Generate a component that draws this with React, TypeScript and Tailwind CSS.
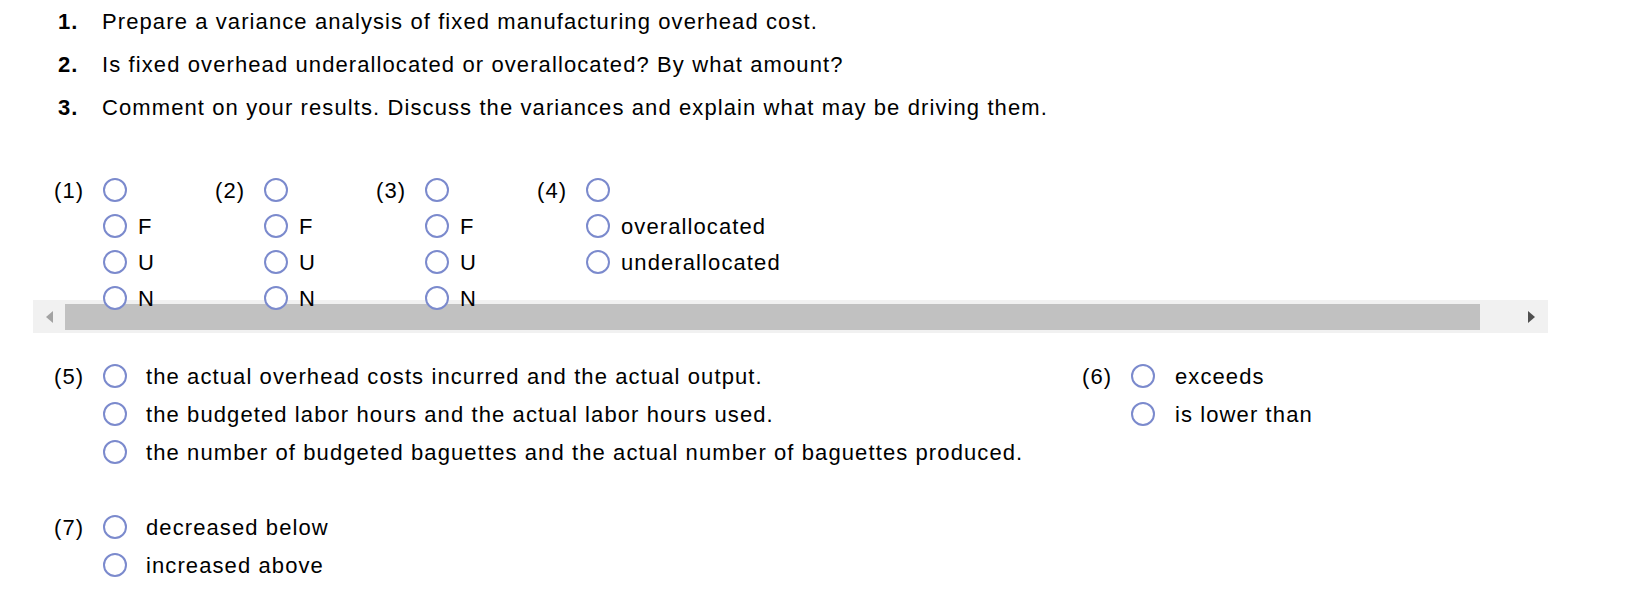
import React from "react";

const questions = [
  "Prepare a variance analysis of fixed manufacturing overhead cost.",
  "Is fixed overhead underallocated or overallocated? By what amount?",
  "Comment on your results. Discuss the variances and explain what may be driving them.",
];

const topGroups = [
  { label: "(1)", options: ["", "F", "U", "N"] },
  { label: "(2)", options: ["", "F", "U", "N"] },
  { label: "(3)", options: ["", "F", "U", "N"] },
  { label: "(4)", options: ["", "overallocated", "underallocated"] },
];

function Radio() {
  return <span className="inline-block w-[24px] h-[24px] shrink-0 rounded-full border-[2px] border-[#7b8acd] bg-white" />;
}

function Group({ label, options, rowH, gap, width }: { label: string; options: string[]; rowH: string; gap: string; width?: string }) {
  return (
    <div className={`flex items-start shrink-0 ${width ?? ""}`}>
      <div className="w-[49px] shrink-0">
        <div className={`${rowH} flex items-center`}>{label}</div>
      </div>
      <div className="flex flex-col">
        {options.map((opt, i) => (
          <label key={i} className={`${rowH} shrink-0 flex items-center ${gap} whitespace-nowrap`}>
            <Radio />
            <span>{opt}</span>
          </label>
        ))}
      </div>
    </div>
  );
}

export default function App() {
  return (
    <div className="w-[1628px] h-[595px] bg-white text-black overflow-hidden text-[22px] tracking-[1.1px]" style={{ fontFamily: '"Liberation Sans", Arial, sans-serif' }}>
      {/* Questions */}
      <ol className="pl-[58px]">
        {questions.map((q, i) => (
          <li key={i} className="flex h-[43px] items-center">
            <span className="w-[44px] font-bold">{i + 1}.</span>
            <span>{q}</span>
          </li>
        ))}
      </ol>

      {/* Scrollable answer row */}
      <div className="ml-[33px] w-[1515px]">
        <div className="relative z-10 h-[171px] pt-[43px] pl-[21px] flex items-start">
          {topGroups.map((g) => (
            <Group key={g.label} label={g.label} options={g.options} rowH="h-[36px]" gap="gap-[11px]" width="w-[161px]" />
          ))}
        </div>
        {/* Scrollbar */}
        <div className="h-[33px] pt-[4px] bg-[#f1f1f1] flex items-start">
          <div className="w-[32px] h-[26px] flex items-center justify-center">
            <svg width="10" height="14" viewBox="0 0 10 14"><path d="M9 1 L2 7 L9 13 Z" fill="#a3a3a3" /></svg>
          </div>
          <div className="w-[1415px] h-[26px] bg-[#c1c1c1]" />
          <div className="flex-1" />
          <div className="w-[32px] h-[26px] flex items-center justify-center">
            <svg width="10" height="14" viewBox="0 0 10 14"><path d="M1 1 L8 7 L1 13 Z" fill="#505050" /></svg>
          </div>
        </div>
      </div>

      {/* (5) and (6) */}
      <div className="mt-[24px] pl-[54px] flex items-start">
        <Group
          label="(5)"
          options={[
            "the actual overhead costs incurred and the actual output.",
            "the budgeted labor hours and the actual labor hours used.",
            "the number of budgeted baguettes and the actual number of baguettes produced.",
          ]}
          rowH="h-[38px]"
          gap="gap-[19px]"
          width="w-[1028px]"
        />
        <Group label="(6)" options={["exceeds", "is lower than"]} rowH="h-[38px]" gap="gap-[20px]" />
      </div>

      {/* (7) */}
      <div className="mt-[37px] pl-[54px] flex items-start">
        <Group label="(7)" options={["decreased below", "increased above"]} rowH="h-[38px]" gap="gap-[19px]" />
      </div>
    </div>
  );
}
